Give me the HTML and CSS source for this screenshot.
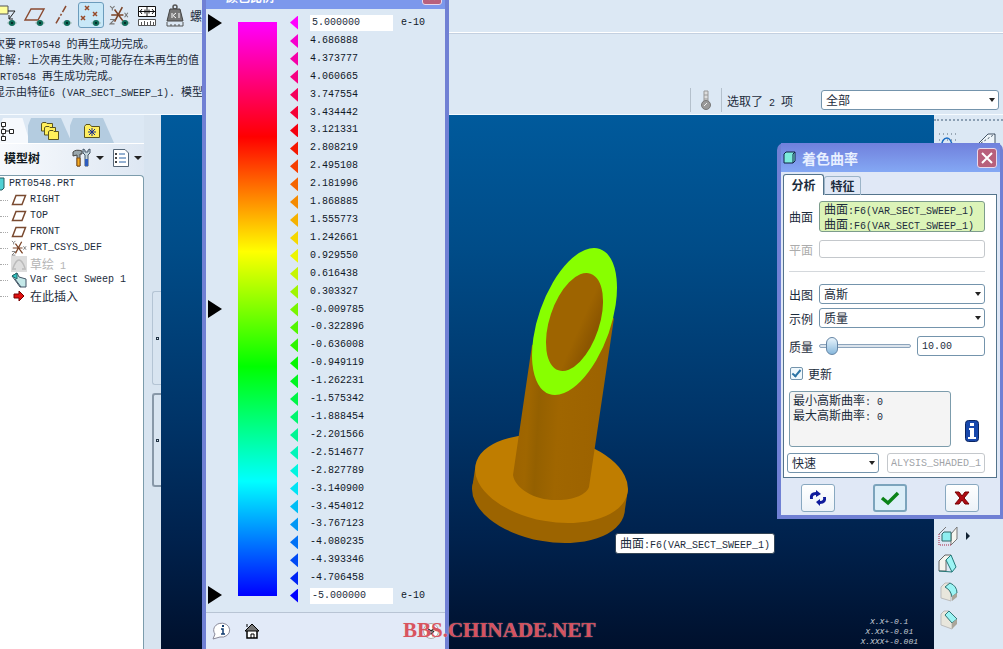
FILE: index.html
```html
<!DOCTYPE html>
<html lang="zh-CN">
<head>
    <meta charset="UTF-8">
    <meta name="viewport" content="width=device-width, initial-scale=1.0">
    <title>PRT0548</title>
    <link rel="stylesheet" href="styles.css">
</head>
<body>
    <!-- shared icon shapes -->
    <svg class="defs" width="0" height="0">
        <symbol id="eye" viewBox="0 0 10 8">
            <path d="M0 4Q5 -2 10 4Q5 9 0 4Z" fill="#9ab8b4"/>
            <circle cx="5" cy="4" r="3" fill="#0f6b58"/>
            <circle cx="5" cy="4" r="1" fill="#021a18"/>
        </symbol>
        <symbol id="plane" viewBox="0 0 16 12">
            <path d="M5 1.5H14.5L11 10.5H1.5Z" fill="none" stroke="#7a4a30" stroke-width="1.5"/>
        </symbol>
        <symbol id="csys" viewBox="0 0 18 18">
            <path d="M2 9H13M5 4L13 15M12 2L5 15" fill="none" stroke="#7a4326" stroke-width="1.4"/>
            <path d="M1 1L3 3L5 1M3 3V5M14 7L17 11M17 7L14 11M1 13H5L1 17H5" fill="none" stroke="#777" stroke-width="1"/>
        </symbol>
    </svg>

    <div class="app">
        <header class="top">
            <div class="toolbar">
                <button class="tool" aria-label="注释显示">
                    <svg width="24" height="24" viewBox="0 0 24 24"><path d="M-2 3H13V11H-2Z" fill="#ffff9c" stroke="#555"/><path d="M13 8H20L14 16M14 16L14 12M14 16H18" fill="none" stroke="#222"/><use href="#eye" x="12" y="16" width="10" height="8"/></svg>
                </button>
                <button class="tool" aria-label="基准平面显示">
                    <svg width="24" height="24" viewBox="0 0 24 24"><path d="M8 6H21L15 17H2Z" fill="none" stroke="#8a4a30" stroke-width="1.4"/><use href="#eye" x="12" y="16" width="10" height="8"/></svg>
                </button>
                <button class="tool" aria-label="基准轴显示">
                    <svg width="24" height="24" viewBox="0 0 24 24"><path d="M15 3L4 22" fill="none" stroke="#8a4a30" stroke-width="1.5" stroke-dasharray="7 2 2 2"/><use href="#eye" x="11" y="16" width="10" height="8"/></svg>
                </button>
                <button class="tool on" aria-label="基准点显示">
                    <svg width="24" height="24" viewBox="0 0 24 24"><path d="M6 3L10 7M10 3L6 7M2 13L6 17M6 13L2 17M14 9L18 13M18 9L14 13" stroke="#984a28" stroke-width="1.5"/><use href="#eye" x="12" y="16" width="10" height="8"/></svg>
                </button>
                <button class="tool" aria-label="坐标系显示">
                    <svg width="24" height="24" viewBox="0 0 24 24"><use href="#csys" x="2" y="2" width="20" height="20"/><use href="#eye" x="13" y="16" width="10" height="8"/></svg>
                </button>
                <button class="tool" aria-label="测量">
                    <svg width="24" height="24" viewBox="0 0 24 24"><path d="M3.500 3.500H20.500V13.500H3.500ZM12 4V13M4 8.500H20M7 6L5 8.500L7 11M17 6L19 8.500L17 11M10 6.500V10.500M14 6.500V10.500" fill="#fff" stroke="#111"/><path d="M3.500 16.500H20.500V22.500H3.500ZM6.500 19V22M9.500 18V22M12.500 19V22M15.500 18V22M18.500 19V22" fill="#fff" stroke="#555"/></svg>
                </button>
                <button class="tool" aria-label="质量属性">
                    <svg width="24" height="24" viewBox="0 0 24 24"><circle cx="12" cy="4" r="2" fill="none" stroke="#555" stroke-width="1.5"/><path d="M7 6H17L20 18H4Z" fill="#777" stroke="#444"/><path d="M9 10V15M13 10L10 12.500L13 15M16 10V15" fill="none" stroke="#fff"/><path d="M4 19V23H20V19M8 21V23M12 21V23M16 21V23" fill="none" stroke="#555"/></svg>
                </button>
                <span class="tool-text">螺</span>
            </div>
            <div class="top-body">
                <div class="messages">
                    <p>次要 <span class="en">PRT0548 </span>的再生成功完成。</p>
                    <p>注解<span class="en">: </span>上次再生失败<span class="en">;</span>可能存在未再生的值</p>
                    <p><span class="en">PRT0548 </span>再生成功完成。</p>
                    <p>显示由特征<span class="en">6 (VAR_SECT_SWEEP_1). </span>模型</p>
                </div>
                <div class="status">
                    <span class="thermo">
                        <svg width="14" height="22" viewBox="0 0 14 22"><path d="M5 2H9V13H5Z" fill="#ddd" stroke="#999"/><path d="M5 6H9M5 10H9" stroke="#999"/><circle cx="7" cy="16" r="4.500" fill="#999" stroke="#777"/><path d="M5 17L8 14" stroke="#eee"/></svg>
                    </span>
                    <label for="filter">选取了<span class="en"> 2 </span>项</label>
                    <span class="combo filter"><select id="filter"><option>全部</option></select></span>
                </div>
            </div>
        </header>

        <div class="work">
            <aside class="side">
                <div class="tree-pane">
                    <nav class="tabs">
                        <button class="tab current" aria-label="模型树">
                            <svg width="16" height="20" viewBox="0 0 16 20"><path d="M3 4V16M3 10H11" stroke="#222"/><path d="M1.500 1.500H5.500V5.500H1.500ZM1.500 8.500H5.500V12.500H1.500ZM9.500 8.500H13.500V12.500H9.500ZM1.500 15.500H5.500V19.500H1.500Z" fill="#fff" stroke="#222"/></svg>
                        </button>
                        <button class="tab" aria-label="文件夹">
                            <svg width="20" height="20" viewBox="0 0 20 20"><g fill="#ffef5a" stroke="#5a5420"><path d="M1.500 10V2.500L3 1.500H6L7 2.500H12.500V10Z"/><path d="M4.500 14V6.500L6 5.500H9L10 6.500H15.500V14Z"/><path d="M8.500 18.500V10.500L10 9.500H13L14 10.500H18.500V18.500Z"/></g></svg>
                        </button>
                        <button class="tab" aria-label="收藏夹">
                            <svg width="18" height="18" viewBox="0 0 18 18"><path d="M1.500 15.500V4.500L3 2.500H7L8.500 4.500H16.500V15.500Z" fill="#ffee60" stroke="#5a5420"/><path d="M9 6V14M5 10H13M6 7L12 13M12 7L6 13" stroke="#1a2c8c"/></svg>
                        </button>
                    </nav>
                    <div class="tree-head">
                        <h2>模型树</h2>
                        <button class="drop" aria-label="设置">
                            <svg width="20" height="20" viewBox="0 0 20 20"><path d="M1 4Q4 1 10 3V6H8V18H5V7L1 8Z" fill="#9aa7ad" stroke="#444"/><path d="M5 10H8V18H5Z" fill="#f4ac24" stroke="#8a5010"/><path d="M11 1V5L13 7V18H16V7L18 5V1L16 2V4H13V2Z" fill="#c4d4dc" stroke="#456"/><path d="M13 11H16V18H13Z" fill="#2c5cc0"/></svg>
                        </button>
                        <button class="drop" aria-label="显示">
                            <svg width="18" height="20" viewBox="0 0 18 20"><path d="M1.500 1.500H13L16.500 5V18.500H1.500Z" fill="#fff" stroke="#567"/><path d="M7 6H13M7 10H14M7 14H14" stroke="#2a62a4"/><path d="M3 5H5V7H3ZM3 9H5V11H3ZM3 13H5V15H3Z" fill="#444"/></svg>
                        </button>
                    </div>
                    <ul class="tree">
                        <li class="root"><svg width="8" height="14" viewBox="0 0 8 14"><path d="M0 3L3 1H7V11L5 13H0Z" fill="#50d0d4" stroke="#245c60"/></svg><span class="en">PRT0548.PRT</span></li>
                        <li><svg width="16" height="12"><use href="#plane"/></svg><span class="en">RIGHT</span></li>
                        <li><svg width="16" height="12"><use href="#plane"/></svg><span class="en">TOP</span></li>
                        <li><svg width="16" height="12"><use href="#plane"/></svg><span class="en">FRONT</span></li>
                        <li><svg width="16" height="16"><use href="#csys"/></svg><span class="en">PRT_CSYS_DEF</span></li>
                        <li class="off"><svg width="16" height="16" viewBox="0 0 16 16"><path d="M0 0H16V16H0Z" fill="#ddd"/><path d="M2 12Q8 -4 14 12M1 13H5M11 13H15" fill="none" stroke="#bbb" stroke-width="1.5"/></svg><span>草绘<span class="en"> 1</span></span></li>
                        <li><svg width="16" height="16" viewBox="0 0 16 16"><path d="M1 4L6 1L8 5L15 7V15H9L4 8Z" fill="#c4e8e8" stroke="#456"/><path d="M1 4L6 1V7Z" fill="#30c8c8" stroke="#266"/><path d="M4 7L10 15" stroke="#456"/></svg><span class="en">Var Sect Sweep 1</span></li>
                        <li><svg width="16" height="14" viewBox="0 0 16 14"><path d="M3 5H8V2L13 7L8 12V9H3Z" fill="#e01010" stroke="#700"/></svg>在此插入</li>
                    </ul>
                </div>
                <div class="splitter">
                    <span class="grip"></span>
                    <span class="grip dark"></span>
                </div>
            </aside>

            <main class="viewport">
                <svg class="model" width="165" height="305" viewBox="469 245 165 305">
                    <defs>
                        <linearGradient id="tube" x1="0" x2="1" y1="0" y2="0.100">
                            <stop offset="0" stop-color="#9c6200"/>
                            <stop offset="0.200" stop-color="#9f6600"/>
                            <stop offset="0.300" stop-color="#946000"/>
                            <stop offset="0.500" stop-color="#a06600"/>
                            <stop offset="1" stop-color="#9c6200"/>
                        </linearGradient>
                        <linearGradient id="hole" x1="0" x2="1" y1="0" y2="0.200">
                            <stop offset="0" stop-color="#9e6400"/>
                            <stop offset="0.700" stop-color="#9e6400"/>
                            <stop offset="1" stop-color="#8c5600"/>
                        </linearGradient>
                    </defs>
                    <g fill="#9c6400">
                        <ellipse cx="548.500" cy="499" rx="77.300" ry="42.500" transform="rotate(10.200 548.500 499)"/>
                        <path d="M475 469L472 489L625 509L628 489Z"/>
                    </g>
                    <ellipse cx="551.500" cy="479" rx="77.300" ry="42.500" transform="rotate(10.200 551.500 479)" fill="#bf7d00"/>
                    <path d="M532 345L513 475C515 489 536 501 558 500C574 500 587 494 589 487L614 318Z" fill="url(#tube)"/>
                    <ellipse cx="574.500" cy="321.500" rx="36.100" ry="76.800" transform="rotate(19.300 574.500 321.500)" fill="#88ff00"/>
                    <ellipse cx="574.500" cy="322" rx="24.900" ry="50.900" transform="rotate(18.300 574.500 322)" fill="url(#hole)"/>
                </svg>
                <div class="hint">曲面<span class="en">:F6(VAR_SECT_SWEEP_1)</span></div>
                <div class="tolerance">
                    <p>X.X+-0.1</p>
                    <p>X.XX+-0.01</p>
                    <p>X.XXX+-0.001</p>
                    <p>ANG.+-0.5</p>
                </div>
            </main>

            <aside class="rail">
                <div class="rail-top">
                    <svg width="20" height="20" viewBox="0 0 20 20"><path d="M1 3H20M1 9H20M1 15H20" stroke="#567" stroke-dasharray="1 3"/><path d="M3 17Q4 7 9 7Q13 7 15 17" fill="none" stroke="#1a6cc4" stroke-width="1.500"/></svg>
                    <svg width="20" height="20" viewBox="0 0 20 20"><path d="M1 12L10 3H17V12L10 19" fill="#eef5fa" stroke="#456"/><path d="M3 12L17 3" stroke="#456" stroke-dasharray="2 2"/></svg>
                </div>
                <div class="rail-tools">
                    <button class="more" aria-label="壳"><svg width="20" height="20" viewBox="0 0 20 20"><path d="M1 8L8 1M13 8L19 1V13L13 19V8" fill="#f6f6f0" stroke="#777"/><path d="M1 8V19H13" fill="none" stroke="#a24" stroke-dasharray="1 1"/><path d="M4 8L6 6H13V15H4Z" fill="#8eeef0" stroke="#366"/></svg></button>
                    <button aria-label="拔模"><svg width="20" height="20" viewBox="0 0 20 20"><path d="M1 7L7 1H13L8 6V17H1Z" fill="#f4f4ee" stroke="#666"/><path d="M8 6L13 1L18 13L14 18Z" fill="#9cf4f4" stroke="#277"/><path d="M1 17L14 18" stroke="#277"/></svg></button>
                    <button aria-label="倒圆角"><svg width="20" height="20" viewBox="0 0 20 20"><path d="M3 5L7 1H12L7 5Q13 8 13 13V19L3 16Z" fill="#e8e6dc" stroke="#bbb"/><path d="M7 5L12 1Q19 4 19 11L14 15Q13 8 7 5Z" fill="#9cf4f4" stroke="#377"/><path d="M14 14L19 11V15L14 19Z" fill="#aaa59a"/></svg></button>
                    <button aria-label="倒角"><svg width="20" height="20" viewBox="0 0 20 20"><path d="M3 4L6 1H11L7 5L14 13V19L3 15Z" fill="#e8e6dc" stroke="#bbb"/><path d="M7 5L11 1L19 9L14 13Z" fill="#9cf4f4" stroke="#377"/><path d="M14 13L19 9V14L14 19Z" fill="#aaa59a"/></svg></button>
                </div>
            </aside>
        </div>

        <!-- colour scale window, its title bar runs off the top -->
        <section class="window scale-window">
            <div class="scale-title"><span>颜色比例</span><button class="close" aria-label="关闭颜色比例">✕</button></div>
            <div class="scale">
                <div class="marks"><i></i><i></i><i></i></div>
                <div class="spectrum"></div>
                <div class="levels" id="levels">
                    <div class="level end"><i style="background:#ff00ff"></i><input class="en" aria-label="最大值" value="5.000000"><span class="en">e-10</span></div>
                    <div class="level end"><i style="background:#0000ff"></i><input class="en" aria-label="最小值" value="-5.000000"><span class="en">e-10</span></div>
                </div>
            </div>
            <footer class="scale-foot">
                <svg width="20" height="18" viewBox="0 0 20 18"><path d="M3 12L1 17L8 15A8 7 0 1 0 3 12Z" fill="#fff" stroke="#889"/><path d="M9 7H11V12M9 12H13" fill="none" stroke="#123c70" stroke-width="1.500"/><path d="M10 3H12V5H10Z" fill="#123c70"/></svg>
                <svg width="16" height="16" viewBox="0 0 16 16"><path d="M3 8V15H13V8" fill="#fff" stroke="#000" stroke-width="1.500"/><path d="M1 8L8 1L15 8Z" fill="#777" stroke="#000"/><path d="M3 1V4M7 15V11H10V15" fill="none" stroke="#000"/></svg>
                <button class="expand" aria-label="展开"><svg width="16" height="16" viewBox="0 0 16 16"><circle cx="8" cy="8" r="7.500" fill="#fff" stroke="#aaa"/><path d="M4 5L8 8L12 5M5 8L8 11L11 8" fill="none" stroke="#222" stroke-width="1.500"/></svg></button>
            </footer>
        </section>

        <!-- shaded curvature dialog -->
        <form class="window dialog">
            <div class="dialog-title">
                <svg width="13" height="13" viewBox="0 0 13 13"><path d="M1 3L3 1H12V10L10 12H1Z" fill="#7cecdc" stroke="#124"/><path d="M10 12V3L12 1" fill="none" stroke="#124"/></svg>
                <h1>着色曲率</h1>
                <button type="button" class="close" aria-label="关闭"><svg width="12" height="12" viewBox="0 0 12 12"><path d="M1 1L11 11M11 1L1 11" stroke="#fff" stroke-width="2"/></svg></button>
            </div>
            <div class="dialog-body">
                <div class="dialog-tabs">
                    <button type="button" class="active">分析</button>
                    <button type="button">特征</button>
                </div>
                <div class="panel">
                    <div class="row">
                        <label for="surfaces">曲面</label>
                        <div class="surfaces" id="surfaces" tabindex="0">
                            <p>曲面<span class="en">:F6(VAR_SECT_SWEEP_1)</span></p>
                            <p>曲面<span class="en">:F6(VAR_SECT_SWEEP_1)</span></p>
                        </div>
                    </div>
                    <div class="row off">
                        <label for="plane-ref">平面</label>
                        <input type="text" id="plane-ref" disabled>
                    </div>
                    <hr>
                    <div class="row tight">
                        <label for="plot">出图</label>
                        <span class="combo"><select id="plot"><option>高斯</option></select></span>
                    </div>
                    <div class="row">
                        <label for="sample">示例</label>
                        <span class="combo"><select id="sample"><option>质量</option></select></span>
                    </div>
                    <div class="row">
                        <label for="quality">质量</label>
                        <input type="range" id="quality" min="0" max="100" value="8">
                        <input type="text" class="en quality-value" aria-label="质量值" value="10.00">
                    </div>
                    <label class="check"><input type="checkbox" checked>更新</label>
                    <div class="result">
                        <output>
                            <p>最小高斯曲率<span class="en">: 0</span></p>
                            <p>最大高斯曲率<span class="en">: 0</span></p>
                        </output>
                        <svg width="14" height="22" viewBox="0 0 14 22"><rect x="0.500" y="0.500" width="13" height="21" rx="3" fill="#1848ac" stroke="#0a2460"/><path d="M5 3H9V6H5ZM4 8H9V17H11V19H3V17H5V10H4Z" fill="#fff"/></svg>
                    </div>
                    <div class="save">
                        <span class="combo"><select aria-label="保存类型"><option>快速</option></select></span>
                        <input type="text" class="en" aria-label="分析名称" value="ALYSIS_SHADED_1" disabled>
                    </div>
                </div>
                <div class="actions">
                    <button type="button" aria-label="重复"><svg width="20" height="18" viewBox="0 0 20 18"><path d="M2 10Q1 3 8 3V1L13 5L8 8V6Q4 6 5 10ZM18 8Q19 15 12 15V17L8 13L12 10V12Q16 12 15 8Z" fill="#101c9c"/></svg></button>
                    <button type="button" class="default" aria-label="确定"><svg width="20" height="16" viewBox="0 0 20 16"><path d="M2 8L8 13L18 3" fill="none" stroke="#0b8418" stroke-width="3.500"/></svg></button>
                    <button type="button" aria-label="取消"><svg width="18" height="16" viewBox="0 0 18 16"><path d="M2 2H6L9 6L12 2H16L11 8L16 14H12L9 10L6 14H2L7 8Z" fill="#b00c14" stroke="#700"/></svg></button>
                </div>
            </div>
        </form>

        <div class="watermark">BBS.CHINADE.NET</div>
    </div>

    <script>
        const values = [
            '4.686888', '4.373777', '4.060665', '3.747554', '3.434442', '3.121331', '2.808219', '2.495108',
            '2.181996', '1.868885', '1.555773', '1.242661', '0.929550', '0.616438', '0.303327', '-0.009785',
            '-0.322896', '-0.636008', '-0.949119', '-1.262231', '-1.575342', '-1.888454', '-2.201566', '-2.514677',
            '-2.827789', '-3.140900', '-3.454012', '-3.767123', '-4.080235', '-4.393346', '-4.706458'
        ];

        const levels = document.getElementById('levels');
        const last = levels.lastElementChild;

        values.forEach(value => {
            // magenta at +5, through red, yellow, green and cyan, to blue at -5
            const hue = (300 + (5 - value) * 30) % 360;
            const row = document.createElement('div');
            row.className = 'level';
            row.innerHTML = `<i style="background:hsl(${hue}, 100%, 48%)"></i><span class="en">${value}</span>`;
            levels.insertBefore(row, last);
        });
    </script>
</body>
</html>
```

FILE: styles.css
```css
*, *::before, *::after {
    box-sizing: border-box;
}

body, html {
    margin: 0;
    padding: 0;
    height: 100%;
    overflow: hidden;
}

body, button, input, select {
    font-family: "Noto Sans CJK SC", sans-serif;
    font-size: 12px;
    color: #1c2c3c;
}

p, h1, h2, ul {
    margin: 0;
    padding: 0;
}

button {
    border: 0;
    padding: 0;
    background: none;
}

svg {
    display: block;
    flex: none;
}

.defs {
    position: absolute;
}

/* latin runs: half the width of a chinese character */
.en {
    font-family: "Liberation Mono", monospace;
    font-size: 10px;
    line-height: 1;
    white-space: pre;
}

.app {
    position: relative;
    display: flex;
    flex-direction: column;
    height: 100vh;
    overflow: hidden;
    background: #dce8f4;
}

/* header */
.toolbar {
    display: flex;
    align-items: center;
    gap: 2px;
    height: 33px;
    padding: 0 0 2px;
    border-bottom: 1px solid #fff;
    box-shadow: 0 1px 0 #c4d0e0;
    margin-left: -6px;
}

.tool {
    display: flex;
    justify-content: center;
    align-items: center;
    width: 26px;
    height: 26px;
    border: 1px solid transparent;
    border-radius: 3px;
}

.tool.on {
    border-color: #6c9cbc;
    background: #c8e8f8;
}

.tool-text {
    white-space: nowrap;
}

.top-body {
    display: flex;
    justify-content: space-between;
    height: 82px;
    border-bottom: 1px solid #f6fbff;
}

.messages {
    margin-left: -6px;
    padding-top: 2px;
    font-size: 11px;
    line-height: 16px;
    white-space: nowrap;
}

.status {
    display: flex;
    align-items: center;
    align-self: flex-end;
    height: 28px;
    padding-right: 4px;
}

.thermo {
    padding: 1px 8px;
    margin-right: 5px;
    border-left: 1px solid #b4c0cc;
    border-right: 1px solid #b4c0cc;
}

.filter {
    width: 178px;
    margin-left: 28px;
}

.combo {
    position: relative;
    display: flex;
}

.combo::after {
    content: "";
    position: absolute;
    right: 4px;
    top: 8px;
    border: 3px solid transparent;
    border-top: 4px solid #222;
    pointer-events: none;
}

select, input[type="text"] {
    appearance: none;
    width: 100%;
    min-width: 0;
    height: 20px;
    padding: 0 4px;
    border: 1px solid #7494ac;
    border-radius: 3px;
    background: #fff;
    line-height: 18px;
}

/* work area */
.work {
    display: flex;
    flex: 1;
    min-height: 0;
}

.side {
    display: flex;
    width: 161px;
}

.tree-pane {
    display: flex;
    flex-direction: column;
    width: 144px;
}

.tabs {
    display: flex;
    height: 28px;
    padding-top: 3px;
}

.tab {
    display: flex;
    justify-content: center;
    align-items: center;
    width: 44px;
    margin-right: -2px;
    background: #b4cce0;
    clip-path: polygon(0 30%, 3px 0, 75% 0, 100% 100%, 0 100%);
}

.tab.current {
    width: 30px;
    justify-content: flex-start;
    background: #f6f9fd;
}

.tree-head {
    display: flex;
    align-items: center;
    gap: 8px;
    width: 152px;
    height: 32px;
    padding: 0 0 4px 4px;
    border-top: 1px solid #fff;
    border-right: 1px solid #a8b8c8;
    border-radius: 0 4px 0 0;
    background: linear-gradient(90deg, #f8fafd, #dce6f2);
}

.tree-head h2 {
    width: 60px;
    font-size: 12px;
    color: #101820;
}

.drop {
    display: flex;
    align-items: center;
    gap: 4px;
}

.drop::after {
    content: "";
    border: 4px solid transparent;
    border-top-color: #222;
    border-bottom: 0;
}

.tree {
    flex: 1;
    list-style: none;
    border: 1px solid #7c9cac;
    border-left: 0;
    border-bottom: 0;
    border-radius: 0 4px 0 0;
    background: #fff;
}

.tree li {
    display: flex;
    align-items: center;
    gap: 3px;
    height: 16px;
    line-height: 14px;
    white-space: nowrap;
}

.tree li::before {
    content: "";
    width: 8px;
    border-top: 1px dotted #aaa;
}

.tree .root {
    gap: 4px;
    margin-left: -3px;
}

.tree .root::before {
    content: none;
}

.tree .off {
    color: #b4b4b4;
}

.splitter {
    display: flex;
    flex-direction: column;
    align-items: flex-end;
    gap: 8px;
    flex: 1;
    padding-top: 176px;
    background: #d8e4f0;
}

.grip {
    display: flex;
    justify-content: center;
    align-items: center;
    width: 9px;
    height: 94px;
    border: 1px solid #b4c4d4;
    border-right: 0;
    border-radius: 3px 0 0 3px;
}

.grip::after {
    content: "";
    width: 3px;
    height: 3px;
    border: 1px solid #234;
}

.grip.dark {
    border: 2px solid #8898a8;
    border-right: 0;
}

.viewport {
    position: relative;
    flex: 1;
    overflow: hidden;
    background: linear-gradient(#005a9c, #004c88 25%, #003468 57%, #00214c 80%, #00102c);
}

.model {
    position: absolute;
    left: 308px;
    top: 130px;
}

.hint {
    position: absolute;
    left: 454px;
    top: 418px;
    height: 21px;
    padding: 0 4px;
    border: 1px solid #345;
    border-radius: 3px;
    background: #fff;
    line-height: 18px;
    white-space: nowrap;
}

.tolerance {
    position: absolute;
    right: 16px;
    bottom: -8px;
    font: italic 8px/10px "Liberation Mono", monospace;
    color: #c4ccd4;
    text-align: center;
}

.rail {
    display: flex;
    flex-direction: column;
    justify-content: space-between;
    width: 69px;
    padding: 4px 0 19px;
}

.rail-top {
    display: flex;
    justify-content: space-between;
    padding: 10px 5px 0 4px;
    border-top: 2px dotted #8ca0b4;
}

.rail-tools {
    display: flex;
    flex-direction: column;
    gap: 8px;
    padding-left: 4px;
}

.rail-tools button {
    display: flex;
    align-items: center;
    gap: 8px;
}

.more::after {
    content: "";
    border: 4px solid transparent;
    border-left-color: #123;
    border-right: 0;
}

/* windows */
.window {
    position: absolute;
    border: 4px solid #7080d4;
    background: #dce8f4;
}

.close {
    display: flex;
    justify-content: center;
    align-items: center;
    width: 20px;
    height: 20px;
    border: 1px solid #e8d8ec;
    border-radius: 3px;
    background: #b8607c;
    color: #fff;
}

.scale-window {
    left: 202px;
    top: 0;
    bottom: 0;
    width: 247px;
    display: flex;
    flex-direction: column;
    border-top: 0;
    border-bottom: 0;
}

.scale-title {
    display: flex;
    justify-content: space-between;
    align-items: flex-end;
    height: 9px;
    padding: 0 3px 4px 20px;
    overflow: hidden;
    background: #7c98ec;
    color: #fff;
    font-weight: bold;
}

.scale {
    display: flex;
    flex: 1;
    min-height: 0;
    padding: 5px 2px 8px;
}

.marks {
    display: flex;
    flex-direction: column;
    justify-content: space-between;
    width: 30px;
}

.marks i {
    width: 14px;
    height: 18px;
    background: #000;
    clip-path: polygon(0 0, 100% 50%, 0 100%);
}

.spectrum {
    width: 39px;
    margin: 8px 13px 8px 0;
    background: linear-gradient(#f0f, #f00 20%, #ff0 40%, #0f0 60%, #0ff 80%, #00f);
}

.levels {
    display: flex;
    flex-direction: column;
    flex: 1;
}

.level {
    display: flex;
    align-items: center;
    gap: 12px;
    flex: 1;
    min-height: 0;
    color: #101828;
}

.level.end {
    flex: none;
    height: 17px;
}

.level.end:first-child {
    margin-bottom: 1px;
}

.level i {
    width: 8px;
    height: 14px;
    background: #000;
    clip-path: polygon(100% 0, 100% 100%, 0 50%);
}

.level input {
    width: 83px;
    height: 16px;
    margin-right: -4px;
    padding: 0 2px;
    border: 0;
    background: #fff;
}

.scale-foot {
    display: flex;
    align-items: center;
    gap: 12px;
    height: 37px;
    padding: 0 6px;
    border-top: 1px solid #b8c4d4;
    background: #e2eaf8;
}

.expand {
    margin-left: auto;
}

.dialog {
    top: 143px;
    right: 0;
    width: 226px;
    border-top: 0;
    border-right-width: 3px;
    border-radius: 7px 7px 0 0;
    background: #7080d4;
}

.dialog-title {
    display: flex;
    align-items: center;
    gap: 6px;
    height: 29px;
    padding: 0 3px 0 2px;
    background: linear-gradient(#7080dc, #84a8f4);
}

.dialog-title h1 {
    flex: 1;
    font-size: 14px;
    line-height: 20px;
    color: #e8f0ff;
}

.dialog-body {
    padding: 2px 3px 3px 2px;
    background: #e0e8f6;
}

.dialog-tabs {
    display: flex;
    align-items: flex-end;
    height: 21px;
    margin-bottom: -1px;
}

.dialog-tabs button {
    height: 19px;
    width: 37px;
    border: 1px solid #9cb4c8;
    border-bottom: 0;
    border-radius: 3px 3px 0 0;
    font-weight: bold;
    line-height: 16px;
}

.dialog-tabs .active {
    position: relative;
    width: 41px;
    height: 21px;
    border-color: #54748c;
    background: #fff;
}

.panel {
    display: flex;
    flex-direction: column;
    gap: 8px;
    padding: 6px 11px 4px 5px;
    border: 1px solid #54748c;
    background: #fff;
}

.row {
    display: flex;
    align-items: center;
}

.row.tight {
    margin-bottom: -4px;
}

.row label {
    flex: none;
    width: 30px;
}

.row .combo {
    flex: 1;
}

.surfaces {
    flex: 1;
    height: 31px;
    padding: 0 4px;
    border: 1px solid #7c9c8c;
    border-radius: 3px;
    background: #dcf4b8;
    line-height: 14px;
    white-space: nowrap;
}

.row.off {
    color: #acacac;
}

.row.off input {
    height: 18px;
    border-color: #c4c8cc;
}

hr {
    width: 100%;
    margin: 5px 0 4px;
    border: 0;
    border-top: 1px solid #d4d8dc;
}

input[type="range"] {
    appearance: none;
    flex: 1;
    min-width: 0;
    height: 20px;
    margin: 0 6px 0 0;
    background: none;
}

input[type="range"]::-webkit-slider-runnable-track {
    height: 4px;
    border: 1px solid #8ca4bc;
    border-radius: 2px;
    background: #dce4ec;
}

input[type="range"]::-webkit-slider-thumb {
    appearance: none;
    width: 12px;
    height: 18px;
    margin-top: -8px;
    border: 1px solid #6484a4;
    border-radius: 6px;
    background: linear-gradient(#e8f4fc, #88b8dc);
}

.row .quality-value {
    width: 68px;
}

.check {
    display: flex;
    align-items: center;
    gap: 4px;
    height: 19px;
}

.check input {
    appearance: none;
    display: flex;
    justify-content: center;
    width: 13px;
    height: 13px;
    margin: 0 1px;
    border: 1px solid #7494ac;
    border-radius: 2px;
    background: #f0f8fc;
}

.check input:checked::after {
    content: "";
    width: 5px;
    height: 9px;
    border: solid #2c74a4;
    border-width: 0 2px 2px 0;
    transform: rotate(40deg);
}

.result {
    display: flex;
    align-items: center;
    gap: 14px;
}

.result output {
    width: 162px;
    height: 56px;
    padding: 1px 3px;
    border: 1px solid #7c9cac;
    border-radius: 3px;
    background: #f4f4f4;
    line-height: 14px;
}

.result svg {
    margin-top: 24px;
}

.save {
    display: flex;
    gap: 8px;
    margin-left: -2px;
    margin-top: -2px;
}

.save .combo {
    width: 92px;
}

.save input[type="text"] {
    flex: 1;
    padding: 0 3px;
    border-color: #c4c8cc;
    color: #a0a4a8;
}

.actions {
    display: flex;
    justify-content: space-between;
    padding: 6px 18px 0;
}

.actions button {
    display: flex;
    justify-content: center;
    align-items: center;
    width: 34px;
    height: 28px;
    border: 1px solid #88a8c0;
    border-radius: 3px;
    background: linear-gradient(#fff, #ecf2f8);
}

.actions .default {
    border: 2px solid #7ca4bc;
    background: #dceef8;
}

.watermark {
    position: absolute;
    left: 403px;
    bottom: 7px;
    font: bold 21px/24px "Liberation Serif", serif;
    color: rgba(212, 52, 64, 0.8);
    text-shadow: 0 0 1px #e8c8d0;
}
```
